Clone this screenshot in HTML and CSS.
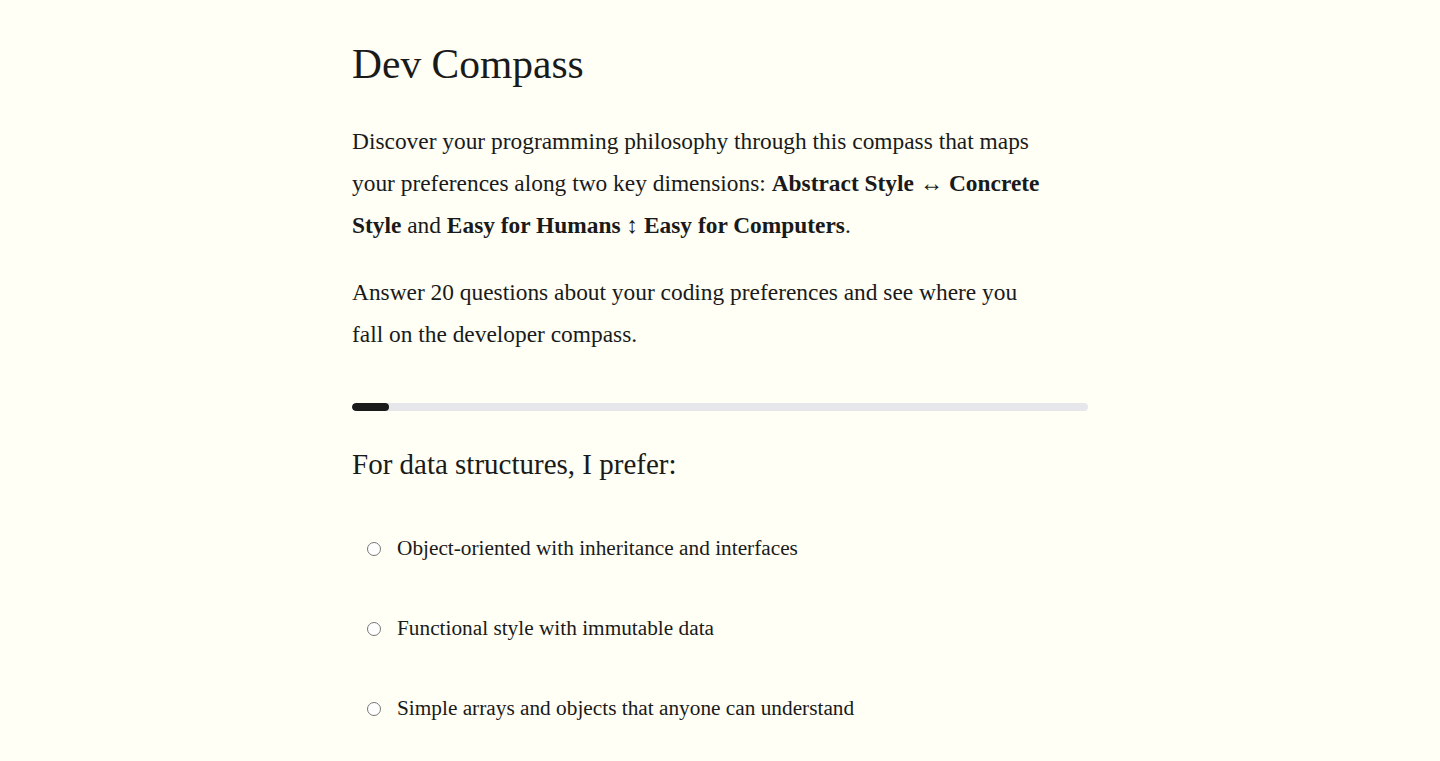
FILE: index.html
```html
<!DOCTYPE html>
<html lang="en">
<head>
    <meta charset="UTF-8">
    <meta name="viewport" content="width=device-width, initial-scale=1.0">
    <title>Dev Compass</title>
    <link rel="stylesheet" href="styles.css">
</head>
<body>
  <div class="container">
    <h1>Dev Compass</h1>
    <p class="intro">Discover your programming philosophy through this compass that maps your preferences along two key dimensions: <strong>Abstract Style &harr; Concrete Style</strong> and <strong>Easy for Humans &#8597; Easy for Computers</strong>.</p>
    <p class="intro">Answer 20 questions about your coding preferences and see where you fall on the developer compass.</p>
    <div class="progress">
      <div class="progress-fill" style="width: 5%;"></div>
    </div>
    <div class="question">
      <h2>For data structures, I prefer:</h2>
      <div class="options">
        <label class="option"><input type="radio" name="q1" value="a"><span>Object-oriented with inheritance and interfaces</span></label>
        <label class="option"><input type="radio" name="q1" value="b"><span>Functional style with immutable data</span></label>
        <label class="option"><input type="radio" name="q1" value="c"><span>Simple arrays and objects that anyone can understand</span></label>
      </div>
    </div>
  </div>
</body>
</html>
```

FILE: styles.css
```css
body {
  font-family: 'Liberation Serif', 'Times New Roman', serif;
  background-color: #fffff5;
  color: #1a1a1a;
  margin: 0;
  padding: 0;
}
.container {
  max-width: 736px;
  margin: 0 auto;
  padding: 0 16px;
}
h1 {
  font-size: 41.5px;
  font-weight: normal;
  line-height: 48px;
  margin: 40px 0 32px;
}
.intro {
  font-size: 23.4px;
  line-height: 42px;
  max-width: 693px;
  margin: 0 0 25px;
}
.progress {
  height: 8px;
  background-color: #e5e7eb;
  border-radius: 4px;
  margin-top: 48px;
  overflow: hidden;
}
.progress-fill {
  height: 100%;
  background-color: #1a1a1a;
  border-radius: 4px;
}
.question h2 {
  font-size: 29px;
  font-weight: normal;
  line-height: 32px;
  margin: 37px 0 28px;
}
.options {
  display: flex;
  flex-direction: column;
}
.option {
  display: flex;
  align-items: center;
  gap: 16px;
  height: 80px;
  padding-left: 15px;
  font-size: 21.3px;
  cursor: pointer;
}
.option input {
  margin: 1px 0 0;
  width: 14px;
  height: 14px;
}
```
